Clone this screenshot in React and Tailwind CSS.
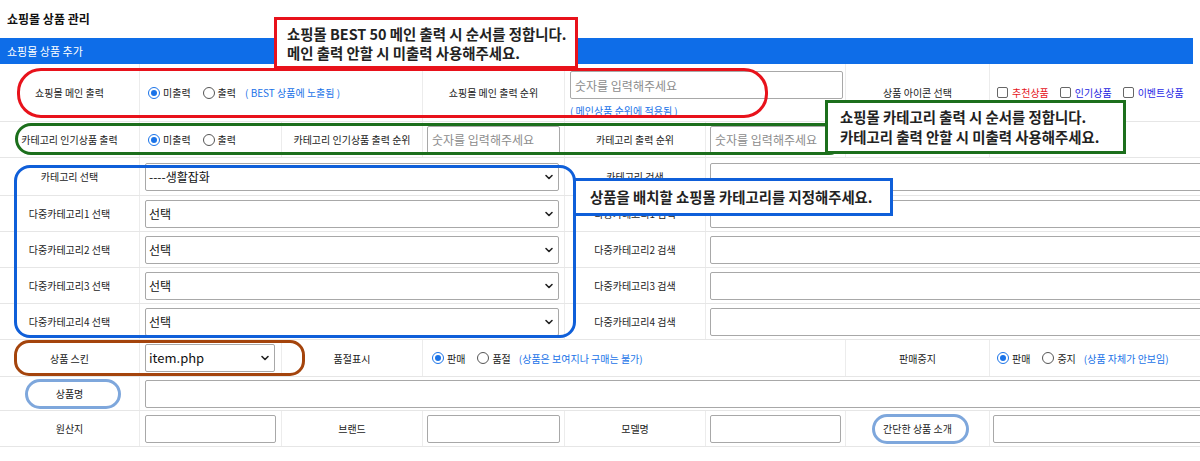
import React from "react";

const ROW =
  "grid grid-cols-[140px_142px_141px_142px_141px_140px_144px_1fr] border-b border-[#e6e6e6]";

function Label({ children, className = "" }) {
  return (
    <div
      className={`flex items-center justify-center border-r border-[#ececec] text-[10px] text-[#222] ${className}`}
    >
      {children}
    </div>
  );
}

function Cell({ children, className = "" }) {
  return (
    <div className={`flex items-center border-r border-[#ececec] ${className}`}>
      {children}
    </div>
  );
}

function Radio({ checked, label }) {
  return (
    <span className="flex items-center gap-[3px] text-[10px] text-[#222]">
      {checked ? (
        <span className="flex h-[12px] w-[12px] items-center justify-center rounded-full border border-[#1a73e8] bg-white">
          <span className="h-[6px] w-[6px] rounded-full bg-[#1a73e8]" />
        </span>
      ) : (
        <span className="h-[12px] w-[12px] rounded-full border border-[#555] bg-white" />
      )}
      <span>{label}</span>
    </span>
  );
}

function Check({ label, color }) {
  return (
    <span className="flex items-center gap-[4px] text-[10px]">
      <span className="h-[11px] w-[11px] rounded-[2px] border border-[#666] bg-white" />
      <span className={color}>{label}</span>
    </span>
  );
}

function TextInput({ placeholder = "", className = "" }) {
  return (
    <input
      readOnly
      placeholder={placeholder}
      className={`h-[28px] rounded-[2px] border border-[#a8a8a8] bg-white px-[4px] text-[12px] text-[#222] outline-none placeholder:text-[#8c8c8c] ${className}`}
    />
  );
}

function Select({ value, className = "" }) {
  return (
    <div
      className={`flex h-[28px] items-center justify-between rounded-[2px] border border-[#a8a8a8] bg-white pl-[3px] pr-[4px] text-[12px] text-[#111] ${className}`}
    >
      <span>{value}</span>
      <svg width="10" height="10" viewBox="0 0 10 10">
        <path
          d="M2 3.5 L5 6.5 L8 3.5"
          fill="none"
          stroke="#222"
          strokeWidth="1.6"
          strokeLinecap="round"
          strokeLinejoin="round"
        />
      </svg>
    </div>
  );
}

const categoryRows = [
  ["카테고리 선택", "----생활잡화", "카테고리 검색"],
  ["다중카테고리1 선택", "선택", "다중카테고리1 검색"],
  ["다중카테고리2 선택", "선택", "다중카테고리2 검색"],
  ["다중카테고리3 선택", "선택", "다중카테고리3 검색"],
  ["다중카테고리4 선택", "선택", "다중카테고리4 검색"],
];

export default function App() {
  return (
    <div className="relative h-[461px] w-[1200px] overflow-hidden bg-white font-['Noto_Sans_CJK_KR','Noto_Sans',sans-serif]">
      <div className="h-[38px] pl-[7px] pt-[10px] text-[12px] font-bold text-[#111]">
        쇼핑몰 상품 관리
      </div>
      <div className="flex h-[26px] w-[1193px] items-center bg-[#0e6de8] pl-[7px] text-[11px] text-white">
        쇼핑몰 상품 추가
      </div>

      <div className="w-[1240px]">
        {/* main output */}
        <div className={`${ROW} h-[58px]`}>
          <Label>쇼핑몰 메인 출력</Label>
          <Cell className="col-span-2 gap-[12px] pl-[8px]">
            <Radio checked label="미출력" />
            <Radio label="출력" />
            <span className="-ml-[3px] text-[10px] text-[#1a73e8]">( BEST 상품에 노출됨 )</span>
          </Cell>
          <Label>쇼핑몰 메인 출력 순위</Label>
          <Cell className="col-span-2 flex-col !items-start justify-center pl-[5px] pt-[4px]">
            <TextInput placeholder="숫자를 입력해주세요" className="w-[273px]" />
            <span className="mt-[4px] text-[10px] text-[#1a73e8]">( 메인상품 순위에 적용됨 )</span>
          </Cell>
          <Label>상품 아이콘 선택</Label>
          <Cell className="gap-[11px] pl-[7px]">
            <Check label="추천상품" color="text-[#e5141b]" />
            <Check label="인기상품" color="text-[#1c1ce0]" />
            <Check label="이벤트상품" color="text-[#2a2ae6]" />
          </Cell>
        </div>

        {/* category popular */}
        <div className={`${ROW} h-[36px]`}>
          <Label>카테고리 인기상품 출력</Label>
          <Cell className="gap-[12px] pl-[8px]">
            <Radio checked label="미출력" />
            <Radio label="출력" />
          </Cell>
          <Label>카테고리 인기상품 출력 순위</Label>
          <Cell className="px-[4px]">
            <TextInput placeholder="숫자를 입력해주세요" className="w-full" />
          </Cell>
          <Label>카테고리 출력 순위</Label>
          <Cell className="px-[4px]">
            <TextInput placeholder="숫자를 입력해주세요" className="w-full" />
          </Cell>
          <Cell />
          <Cell />
        </div>

        {categoryRows.map(([left, value, right], i) => (
          <div key={left} className={`${ROW} ${i === 0 ? "h-[38px]" : "h-[36px]"}`}>
            <Label>{left}</Label>
            <Cell className="col-span-3 px-[5px]">
              <Select value={value} className="w-full" />
            </Cell>
            <Label>{right}</Label>
            <Cell className="col-span-3 px-[4px]">
              <TextInput className="w-full" />
            </Cell>
          </div>
        ))}

        {/* skin / soldout */}
        <div className={`${ROW} h-[37px]`}>
          <Label>상품 스킨</Label>
          <Cell className="px-[5px]">
            <Select value="item.php" className="w-[130px] text-[13px]" />
          </Cell>
          <Label>품절표시</Label>
          <Cell className="col-span-3 gap-[12px] pl-[9px]">
            <Radio checked label="판매" />
            <Radio label="품절" />
            <span className="-ml-[4px] text-[10px] text-[#1a73e8]">(상품은 보여지나 구매는 불가)</span>
          </Cell>
          <Label>판매중지</Label>
          <Cell className="gap-[12px] pl-[7px]">
            <Radio checked label="판매" />
            <Radio label="중지" />
            <span className="-ml-[4px] text-[10px] text-[#1a73e8]">(상품 자체가 안보임)</span>
          </Cell>
        </div>

        {/* name */}
        <div className={`${ROW} h-[34px]`}>
          <Label>상품명</Label>
          <Cell className="col-span-7 px-[5px]">
            <TextInput className="w-full" />
          </Cell>
        </div>

        {/* origin / brand / model / intro */}
        <div className={`${ROW} h-[36px]`}>
          <Label>원산지</Label>
          <Cell className="px-[5px]">
            <TextInput className="w-full" />
          </Cell>
          <Label>브랜드</Label>
          <Cell className="px-[4px]">
            <TextInput className="w-full" />
          </Cell>
          <Label>모델명</Label>
          <Cell className="px-[4px]">
            <TextInput className="w-full" />
          </Cell>
          <Label>간단한 상품 소개</Label>
          <Cell className="px-[3px]">
            <TextInput className="w-full" />
          </Cell>
        </div>
      </div>

      {/* annotation overlays */}
      <div className="pointer-events-none absolute left-[17px] top-[68px] h-[50px] w-[751px] rounded-[24px] border-[3px] border-[#e8121b]" />
      <div className="absolute left-[274px] top-[17px] flex h-[52px] w-[304px] flex-col justify-center border-[3px] border-[#e8121b] bg-white pl-[10px] text-[14.4px] font-bold leading-[19px] text-[#222]">
        <div>쇼핑몰 BEST 50 메인 출력 시 순서를 정합니다.</div>
        <div>메인 출력 안할 시 미출력 사용해주세요.</div>
      </div>

      <div className="pointer-events-none absolute left-[15px] top-[123px] h-[32px] w-[830px] rounded-[16px] border-[3px] border-[#1c6f1c]" />
      <div className="absolute left-[825px] top-[100px] flex h-[54px] w-[301px] flex-col justify-center border-[3px] border-[#1c6f1c] bg-white pl-[12px] text-[14.4px] font-bold leading-[20px] text-[#222]">
        <div>쇼핑몰 카테고리 출력 시 순서를 정합니다.</div>
        <div>카테고리 출력 안할 시 미출력 사용해주세요.</div>
      </div>

      <div className="pointer-events-none absolute left-[14px] top-[165px] h-[173px] w-[562px] rounded-[16px] border-[3px] border-[#0f5fd9]" />
      <div className="absolute left-[573px] top-[178px] flex h-[38px] w-[320px] items-center border-[3px] border-[#0f5fd9] bg-white pl-[14px] text-[14.4px] font-bold text-[#222]">
        상품을 배치할 쇼핑몰 카테고리를 지정해주세요.
      </div>

      <div className="pointer-events-none absolute left-[14px] top-[340px] h-[36px] w-[291px] rounded-[15px] border-[3px] border-[#a4440c]" />
      <div className="pointer-events-none absolute left-[25px] top-[379px] h-[30px] w-[96px] rounded-full border-[3px] border-[#7ea7dc]" />
      <div className="pointer-events-none absolute left-[872px] top-[414px] h-[30px] w-[97px] rounded-full border-[3px] border-[#7ea7dc]" />
    </div>
  );
}
